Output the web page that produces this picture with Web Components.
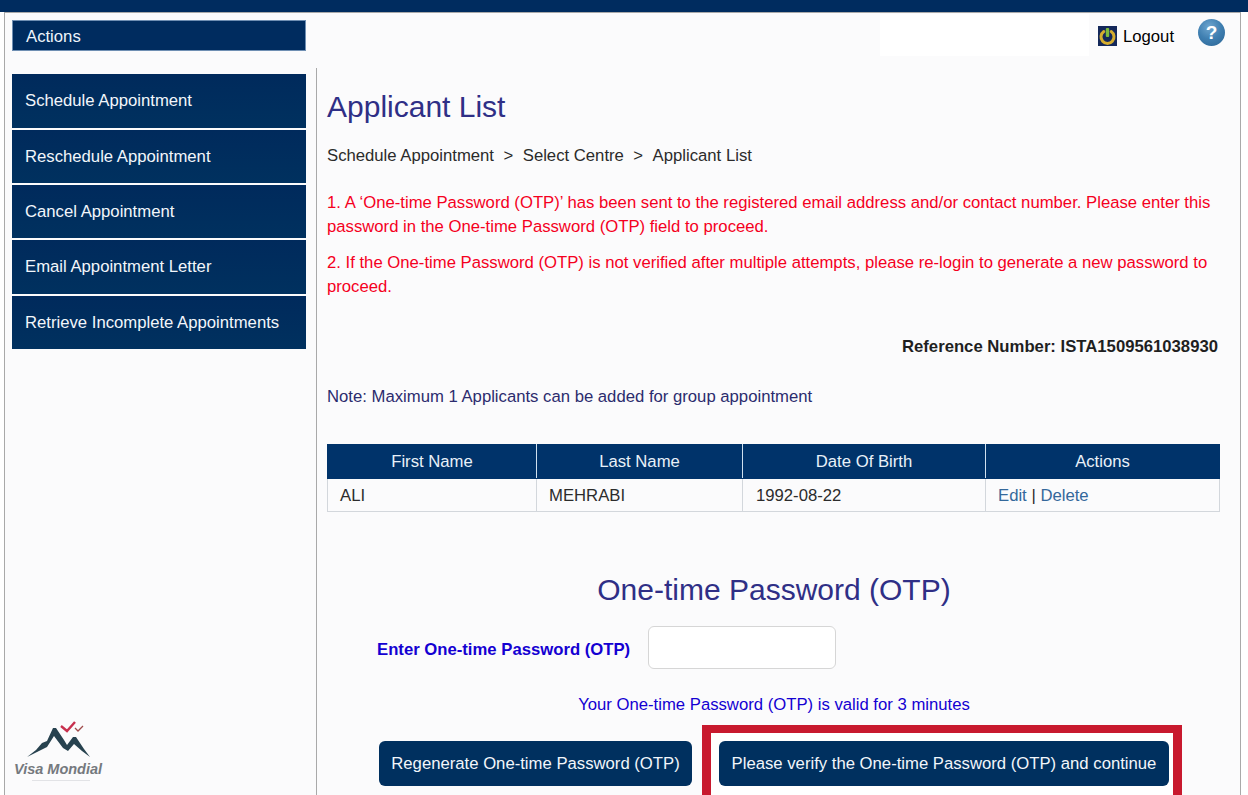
<!DOCTYPE html>
<html lang="en">
<head>
<meta charset="utf-8">
<title>Applicant List</title>
<style>
    html, body {
        margin: 0;
        height: 795px;
        overflow: hidden;
        background: #ffffff;
        font-family: "Liberation Sans", Arial, sans-serif;
    }
</style>
</head>
<body>
<visa-shell>
    <top-tools slot="tools"></top-tools>
    <span slot="actions">Actions</span>
    <side-link slot="menu" tall>Schedule Appointment</side-link>
    <side-link slot="menu">Reschedule Appointment</side-link>
    <side-link slot="menu">Cancel Appointment</side-link>
    <side-link slot="menu" tall>Email Appointment Letter</side-link>
    <side-link slot="menu">Retrieve Incomplete Appointments</side-link>
    <visa-logo slot="logo"></visa-logo>
    <applicant-page></applicant-page>
</visa-shell>

<script>
class VisaShell extends HTMLElement {
    constructor() {
        super();
        this.attachShadow({ mode: 'open' });
    }

    connectedCallback() {
        this.shadowRoot.innerHTML = `
            <style>
                :host {
                    display: block;
                    height: 795px;
                    overflow: hidden;
                }
                .band {
                    height: 12px;
                    background: #002c5f;
                }
                .frame {
                    box-sizing: border-box;
                    width: 1237px;
                    height: 783px;
                    margin-left: 4px;
                    border: 1px solid #a9a9a9;
                    border-bottom: 0;
                    background: #fbfbfc;
                    display: grid;
                    grid-template-columns: 311px 1fr;
                    grid-template-rows: 55px minmax(0, 1fr);
                }
                .actions {
                    margin: 7px 0 0 7px;
                    width: 294px;
                    height: 31px;
                    box-sizing: border-box;
                    background: #002c5f;
                    border: 1px solid #6f8fb3;
                    color: #eef4fb;
                    font-size: 16.7px;
                    line-height: 31px;
                    padding-left: 13px;
                }
                .tools {
                    display: flex;
                    justify-content: flex-end;
                }
                .side {
                    display: flex;
                    flex-direction: column;
                    padding: 6px 0 0 7px;
                }
                .menu {
                    display: flex;
                    flex-direction: column;
                    gap: 2px;
                }
                .logo {
                    margin-top: auto;
                }
                .main {
                    border-left: 1px solid #a9a9a9;
                    padding: 0 19px 0 10px;
                    min-width: 0;
                }
            </style>
            <div class="band"></div>
            <div class="frame">
                <div class="actions"><slot name="actions"></slot></div>
                <div class="tools"><slot name="tools"></slot></div>
                <div class="side">
                    <div class="menu"><slot name="menu"></slot></div>
                    <div class="logo"><slot name="logo"></slot></div>
                </div>
                <div class="main"><slot></slot></div>
            </div>
        `;
    }
}

class TopTools extends HTMLElement {
    constructor() {
        super();
        this.attachShadow({ mode: 'open' });
    }

    connectedCallback() {
        this.shadowRoot.innerHTML = `
            <style>
                :host {
                    display: flex;
                    align-items: flex-start;
                    height: 42px;
                    width: 360px;
                    color: #000000;
                }
                .patch {
                    width: 209px;
                    height: 42px;
                    margin-top: 1px;
                    background: #ffffff;
                }
                .logout {
                    display: flex;
                    align-items: center;
                    gap: 6px;
                    margin: 13px 0 0 9px;
                    height: 20px;
                    font-size: 16.7px;
                    line-height: 20px;
                }
                .logout span {
                    padding-top: 2px;
                }
                svg.power {
                    display: block;
                    width: 19px;
                    height: 20px;
                }
                .help {
                    width: 27px;
                    height: 27px;
                    margin: 6px 0 0 24px;
                    border-radius: 50%;
                    background: radial-gradient(circle at 42% 30%, #6fa6cf 0%, #3f7fb1 48%, #2a6393 100%);
                    color: #ffffff;
                    font-weight: bold;
                    font-size: 19px;
                    line-height: 27px;
                    text-align: center;
                }
            </style>
            <div class="patch"></div>
            <div class="logout">
                <svg class="power" viewBox="0 0 19 20">
                    <rect width="19" height="20" fill="#14285a"/>
                    <path d="M5.8 5.6a6.5 6.5 0 1 0 7.4 0" fill="none" stroke="#d5ad2e" stroke-width="3" stroke-linecap="round"/>
                    <rect x="7.8" y="2" width="3.4" height="9" rx="1" fill="#7dbb3c"/>
                </svg>
                <span>Logout</span>
            </div>
            <div class="help">?</div>
        `;
    }
}

class SideLink extends HTMLElement {
    constructor() {
        super();
        this.attachShadow({ mode: 'open' });
    }

    connectedCallback() {
        const height = this.hasAttribute('tall') ? 54 : 53;
        this.shadowRoot.innerHTML = `
            <style>
                :host {
                    display: flex;
                    align-items: center;
                    box-sizing: border-box;
                    width: 294px;
                    height: ${height}px;
                    padding-left: 13px;
                    background: linear-gradient(#002a5c, #00315f);
                    color: #f2f6fb;
                    font-size: 16.7px;
                }
            </style>
            <slot></slot>
        `;
    }
}

class VisaLogo extends HTMLElement {
    constructor() {
        super();
        this.attachShadow({ mode: 'open' });
    }

    connectedCallback() {
        this.shadowRoot.innerHTML = `
            <style>
                :host {
                    display: block;
                    width: 100px;
                    height: 75px;
                    margin-left: 2px;
                    overflow: hidden;
                }
                svg {
                    display: block;
                    width: 100px;
                    height: 43px;
                }
                .name {
                    margin: 0;
                    color: #75797e;
                    font-size: 14.5px;
                    font-style: italic;
                    font-weight: bold;
                    line-height: 13px;
                    white-space: nowrap;
                }
                .faint {
                    height: 1px;
                    width: 58px;
                    margin: 4px 0 0 18px;
                    background: #e2e3e6;
                }
            </style>
            <svg viewBox="0 0 100 43">
                <path d="M13 37 L22 30 L28 23 L33 21 L39 8 L42 8 L50 20 L53 25 L59 17 L62 17 L70 29 L76 37 L68 31 L60 24 L54 31 L49 28 L40 16 L33 27 L25 31 Z" fill="#27424f"/>
                <path d="M47 6 L53 11 L61 2" fill="none" stroke="#c8304e" stroke-width="2.4"/>
                <path d="M61 8 L64 11 L69 6" fill="none" stroke="#9f4a4a" stroke-width="1.3"/>
            </svg>
            <p class="name">Visa Mondial</p>
            <div class="faint"></div>
        `;
    }
}

class ApplicantTable extends HTMLElement {
    constructor() {
        super();
        this.attachShadow({ mode: 'open' });
    }

    connectedCallback() {
        this.shadowRoot.innerHTML = `
            <style>
                :host {
                    display: block;
                    width: 893px;
                }
                table {
                    width: 892px;
                    table-layout: fixed;
                    border-collapse: collapse;
                    font-size: 16.7px;
                }
                th {
                    height: 33px;
                    padding: 0;
                    background: #00336a;
                    color: #e9f1f9;
                    font-weight: normal;
                    border: 1px solid #cfe0ef;
                    border-top-color: #00336a;
                    border-bottom-color: #00336a;
                }
                th:first-child { border-left-color: #00336a; }
                th:last-child { border-right-color: #00336a; }
                td {
                    height: 33px;
                    box-sizing: border-box;
                    padding: 1px 0 0 12px;
                    color: #2c2c2c;
                    background: #fbfbfc;
                    border: 1px solid #d3d7dc;
                }
                td:nth-child(3) {
                    padding-left: 13px;
                }
                a {
                    color: #34689b;
                    text-decoration: none;
                }
            </style>
            <table>
                <colgroup>
                    <col style="width:209px">
                    <col style="width:206px">
                    <col style="width:243px">
                    <col style="width:234px">
                </colgroup>
                <tr><th>First Name</th><th>Last Name</th><th>Date Of Birth</th><th>Actions</th></tr>
                <tr><td>ALI</td><td>MEHRABI</td><td>1992-08-22</td><td><a href="#">Edit</a> | <a href="#">Delete</a></td></tr>
            </table>
        `;
    }
}

class NavyButton extends HTMLElement {
    constructor() {
        super();
        this.attachShadow({ mode: 'open' });
    }

    connectedCallback() {
        this.shadowRoot.innerHTML = `
            <style>
                :host {
                    display: flex;
                    align-items: center;
                    justify-content: center;
                    box-sizing: border-box;
                    height: 45px;
                    border-radius: 6px;
                    background: #00305f;
                    color: #f2f6fb;
                    font-size: 16.7px;
                    white-space: nowrap;
                }
            </style>
            <slot></slot>
        `;
    }
}

class ApplicantPage extends HTMLElement {
    constructor() {
        super();
        this.attachShadow({ mode: 'open' });
    }

    connectedCallback() {
        this.shadowRoot.innerHTML = `
            <style>
                :host {
                    display: block;
                    font-size: 16.7px;
                    line-height: 24px;
                    color: #2b2b2b;
                }
                h1 {
                    margin: 22px 0 0;
                    color: #2f2f86;
                    font-size: 30px;
                    font-weight: normal;
                    line-height: 34px;
                }
                .crumb {
                    margin-top: 20px;
                    display: flex;
                    gap: 9.5px;
                }
                .red {
                    margin: 12px 0 0;
                    color: #f5001e;
                }
                .red.first {
                    margin-top: 23px;
                }
                .ref {
                    margin-top: 36px;
                    padding-right: 3px;
                    text-align: right;
                    font-weight: bold;
                    color: #1f1f1f;
                }
                .note {
                    margin-top: 26px;
                    color: #2c2c6e;
                }
                applicant-table {
                    margin-top: 35px;
                }
                h2 {
                    margin: 58px 0 0;
                    color: #2f2f86;
                    font-size: 30px;
                    font-weight: normal;
                    line-height: 40px;
                    text-align: center;
                }
                .otp {
                    margin-top: 16px;
                    padding-left: 50px;
                    display: flex;
                    align-items: center;
                    gap: 18px;
                }
                .otp label {
                    padding-top: 4px;
                    color: #1400d2;
                    font-weight: bold;
                }
                .otp input {
                    box-sizing: border-box;
                    width: 188px;
                    height: 43px;
                    padding: 0 8px;
                    background: #ffffff;
                    border: 1px solid #d6d6d6;
                    border-radius: 6px;
                    font: inherit;
                }
                .valid {
                    margin-top: 24px;
                    color: #1400d2;
                    text-align: center;
                }
                .buttons {
                    margin-top: 8px;
                    padding-left: 52px;
                    display: flex;
                    gap: 10px;
                    align-items: flex-start;
                }
                .regen {
                    width: 313px;
                    margin-top: 16px;
                }
                .mark {
                    box-sizing: border-box;
                    width: 480px;
                    height: 75px;
                    padding: 8px 4px 0 8px;
                    border: 9px solid #c8192e;
                    border-top-width: 8px;
                    border-bottom-width: 4px;
                    background: #ffffff;
                }
            </style>
            <h1>Applicant List</h1>
            <div class="crumb"><span>Schedule Appointment</span><span>&gt;</span><span>Select Centre</span><span>&gt;</span><span>Applicant List</span></div>
            <p class="red first">1. A ‘One-time Password (OTP)’ has been sent to the registered email address and/or contact number. Please enter this password in the One-time Password (OTP) field to proceed.</p>
            <p class="red">2. If the One-time Password (OTP) is not verified after multiple attempts, please re-login to generate a new password to proceed.</p>
            <div class="ref">Reference Number: ISTA1509561038930</div>
            <div class="note">Note: Maximum 1 Applicants can be added for group appointment</div>
            <applicant-table></applicant-table>
            <h2>One-time Password (OTP)</h2>
            <div class="otp">
                <label for="otp">Enter One-time Password (OTP)</label>
                <input id="otp" type="text">
            </div>
            <div class="valid">Your One-time Password (OTP) is valid for 3 minutes</div>
            <div class="buttons">
                <navy-button class="regen">Regenerate One-time Password (OTP)</navy-button>
                <div class="mark"><navy-button>Please verify the One-time Password (OTP) and continue</navy-button></div>
            </div>
        `;
    }
}

customElements.define('visa-shell', VisaShell);
customElements.define('top-tools', TopTools);
customElements.define('side-link', SideLink);
customElements.define('visa-logo', VisaLogo);
customElements.define('applicant-table', ApplicantTable);
customElements.define('navy-button', NavyButton);
customElements.define('applicant-page', ApplicantPage);
</script>
</body>
</html>
